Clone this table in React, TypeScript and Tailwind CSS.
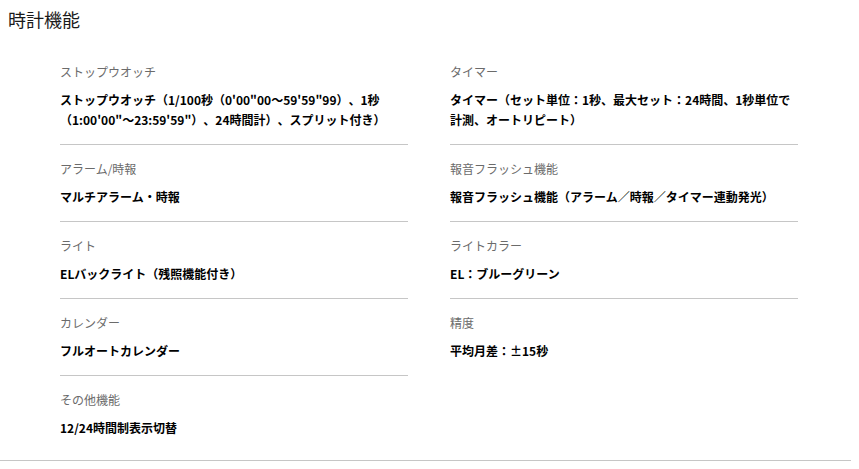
const left = [
  {
    label: "ストップウオッチ",
    value: [
      "ストップウオッチ（1/100秒（0'00\"00～59'59\"99）、1秒",
      "（1:00'00\"～23:59'59\"）、24時間計）、スプリット付き）"
    ]
  },
  { label: "アラーム/時報", value: ["マルチアラーム・時報"] },
  { label: "ライト", value: ["ELバックライト（残照機能付き）"] },
  { label: "カレンダー", value: ["フルオートカレンダー"] },
  { label: "その他機能", value: ["12/24時間制表示切替"] }
];

const right = [
  {
    label: "タイマー",
    value: [
      "タイマー（セット単位：1秒、最大セット：24時間、1秒単位で",
      "計測、オートリピート）"
    ]
  },
  {
    label: "報音フラッシュ機能",
    value: ["報音フラッシュ機能（アラーム／時報／タイマー連動発光）"]
  },
  { label: "ライトカラー", value: ["EL：ブルーグリーン"] },
  { label: "精度", value: ["平均月差：±15秒"] }
];

type Spec = { label: string; value: string[] };

function SpecColumn({ items }: { items: Spec[] }) {
  return (
    <dl className="flex flex-col">
      {items.map((item, i) => (
        <div
          key={item.label}
          className={`pt-[16px] pb-[14px] ${
            i < items.length - 1 ? "border-b border-[#c6c6c6]" : ""
          }`}
        >
          <dt className="text-[12px] leading-[16px] text-[#6b6b6b]">
            {item.label}
          </dt>
          <dd className="mt-[10px] text-[12px] font-bold leading-[20px] text-black whitespace-nowrap">
            {item.value.map((line) => (
              <div key={line}>{line}</div>
            ))}
          </dd>
        </div>
      ))}
    </dl>
  );
}

export default function App() {
  return (
    <div
      lang="ja"
      className="min-h-screen bg-white font-['Noto_Sans_CJK_JP','Noto_Sans',sans-serif] [text-spacing-trim:space-all]"
    >
      <section className="w-[851px] border-b border-[#c6c6c6] pt-[7px] pb-[8px]">
        <h2 className="pl-[8px] text-[18px] leading-[24px] font-normal text-[#1a1a1a]">
          時計機能
        </h2>
        <div className="mt-[17px] grid grid-cols-[348px_348px] gap-x-[42px] pl-[60px]">
          <SpecColumn items={left} />
          <SpecColumn items={right} />
        </div>
      </section>
    </div>
  );
}
